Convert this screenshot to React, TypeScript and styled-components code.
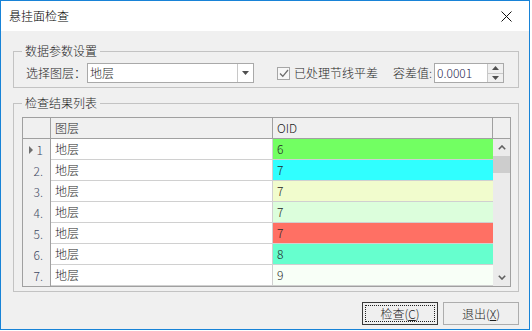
import React from "react";
import styled, { createGlobalStyle } from "styled-components";

const GlobalStyle = createGlobalStyle`
  html, body {
    margin: 0;
    padding: 0;
    background: #ffffff;
  }
  body {
    font-family: "Noto Sans CJK SC", "Microsoft YaHei", sans-serif;
    font-size: 12px;
    font-weight: 300;
    color: #1e1e1e;
  }
`;

const Window = styled.div`
  width: 530px;
  height: 330px;
  box-sizing: border-box;
  border: 1px solid #1883d7;
  display: flex;
  flex-direction: column;
  background: #f0f0f0;
`;

const TitleBar = styled.div`
  height: 30px;
  flex-shrink: 0;
  background: #ffffff;
  display: flex;
  align-items: center;
  justify-content: space-between;
  padding-left: 8px;
`;

const Title = styled.span`
  font-size: 12px;
  line-height: 16px;
  color: #000000;
`;

const CloseButton = styled.div`
  width: 46px;
  height: 30px;
  display: flex;
  align-items: center;
  justify-content: center;
`;

const Body = styled.div`
  flex: 1;
  display: flex;
  flex-direction: column;
  padding: 12px 10px 0 12px;
`;

const Group = styled.fieldset<{ $gap?: number }>`
  margin: ${p => p.$gap || 0}px 0 0 0;
  padding: 0;
  border: 1px solid #c3c3c3;
  min-width: 0;
`;

const Legend = styled.legend`
  margin-left: 8px;
  padding: 0 3px;
  line-height: 16px;
  font-size: 12px;
  color: #1e1e1e;
`;

const ParamRow = styled.div`
  display: flex;
  align-items: center;
  height: 20px;
  padding: 4px 0 4px 12px;
`;

const Label = styled.span<{ $ml?: number }>`
  margin-left: ${p => p.$ml || 0}px;
  line-height: 16px;
  white-space: nowrap;
`;

const Combo = styled.div`
  margin-left: 1px;
  width: 167px;
  height: 20px;
  box-sizing: border-box;
  border: 1px solid #a9a9a9;
  background: #ffffff;
  display: flex;
`;

const ComboText = styled.div`
  flex: 1;
  padding-left: 2px;
  line-height: 18px;
`;

const DropButton = styled.div`
  width: 15px;
  border-left: 1px solid #c8c8c8;
  display: flex;
  align-items: center;
  justify-content: center;
`;

const Check = styled.div`
  margin-left: 23px;
  width: 13px;
  height: 13px;
  box-sizing: border-box;
  border: 1px solid #a6a6a6;
  background: #f7f7f7;
  display: flex;
  align-items: center;
  justify-content: center;
`;

const Spin = styled.div`
  margin-left: 2px;
  width: 70px;
  height: 20px;
  box-sizing: border-box;
  border: 1px solid #a9a9a9;
  background: #ffffff;
  display: flex;
`;

const SpinText = styled.div`
  flex: 1;
  padding-left: 2px;
  line-height: 18px;
  color: #1f1f4f;
`;

const SpinButtons = styled.div`
  width: 15px;
  border-left: 1px solid #c8c8c8;
  display: flex;
  flex-direction: column;
`;

const SpinHalf = styled.div<{ $top?: boolean }>`
  flex: 1;
  display: flex;
  align-items: center;
  justify-content: center;
  background: #f0f0f0;
  border-bottom: ${p => (p.$top ? "1px solid #c8c8c8" : "none")};
`;

const GridWrap = styled.div`
  padding: 6px 7px 4px 8px;
`;

const Grid = styled.div`
  display: grid;
  grid-template-columns: 28px 222px 220px 17px;
  grid-template-rows: 21px repeat(7, 21px);
  border: 1px solid #a0a0a0;
  background: #ffffff;
`;

const HeadCell = styled.div<{ $last?: boolean }>`
  box-sizing: border-box;
  background: #f0f0f0;
  border-bottom: 1px solid #a0a0a0;
  border-right: ${p => (p.$last ? "none" : "1px solid #a0a0a0")};
  padding-left: 4px;
  line-height: 20px;
  color: #1e1e1e;
`;

const RowHead = styled.div`
  box-sizing: border-box;
  background: #f0f0f0;
  border-right: 1px solid #a0a0a0;
  display: flex;
  align-items: center;
  justify-content: flex-end;
  padding-right: 7px;
  color: #3e4862;
  line-height: 20px;
`;

const Marker = styled.span`
  width: 0;
  height: 0;
  border-top: 4px solid transparent;
  border-bottom: 4px solid transparent;
  border-left: 4px solid #707070;
  margin-right: 4px;
`;

const Cell = styled.div<{ $bg?: string; $divider?: boolean }>`
  box-sizing: border-box;
  background: ${p => p.$bg || "#ffffff"};
  border-bottom: 1px solid #d0d0d0;
  border-right: ${p => (p.$divider ? "1px solid #d0d0d0" : "none")};
  padding-left: 4px;
  line-height: 20px;
  color: #262626;
`;

const ScrollBar = styled.div`
  grid-column: 4;
  grid-row: 2 / span 7;
  background: #ebebeb;
  display: flex;
  flex-direction: column;
`;

const ScrollArrow = styled.div`
  height: 17px;
  display: flex;
  align-items: center;
  justify-content: center;
`;

const Thumb = styled.div`
  height: 17px;
  background: #cdcdcd;
`;

const Track = styled.div`
  flex: 1;
`;

const Footer = styled.div`
  display: flex;
  justify-content: flex-end;
  gap: 5px;
  margin-top: 10px;
`;

const Button = styled.div<{ $focused?: boolean }>`
  width: 76px;
  height: 23px;
  box-sizing: border-box;
  border: 1px solid ${p => (p.$focused ? "#3a3a3a" : "#adadad")};
  background: #efefef;
  display: flex;
  align-items: center;
  justify-content: center;
  line-height: 16px;
  color: #1e1e1e;
  outline: ${p => (p.$focused ? "1px dotted #202020" : "none")};
  outline-offset: -4px;
`;

const rows = [
  { oid: "6", bg: "#72ff62" },
  { oid: "7", bg: "#30ffff" },
  { oid: "7", bg: "#f1fccd" },
  { oid: "7", bg: "#dcfedc" },
  { oid: "7", bg: "#ff7064" },
  { oid: "8", bg: "#66ffce" },
  { oid: "9", bg: "#f8fff7" },
];

function Chevron({ up }: { up?: boolean }) {
  return (
    <svg width="8" height="5" viewBox="0 0 8 5">
      <polyline
        points={up ? "0.8,4.2 4,1 7.2,4.2" : "0.8,0.8 4,4 7.2,0.8"}
        fill="none"
        stroke="#606060"
        strokeWidth="1.6"
      />
    </svg>
  );
}

function Triangle({ up }: { up?: boolean }) {
  return (
    <svg width="7" height="4" viewBox="0 0 7 4">
      <polygon points={up ? "0,4 3.5,0 7,4" : "0,0 7,0 3.5,4"} fill="#505050" />
    </svg>
  );
}

export default function App() {
  return (
    <>
      <GlobalStyle />
      <Window>
        <TitleBar>
          <Title>悬挂面检查</Title>
          <CloseButton>
            <svg width="11" height="11" viewBox="0 0 11 11">
              <path d="M0.5 0.5 L10.5 10.5 M10.5 0.5 L0.5 10.5" stroke="#111" strokeWidth="1" />
            </svg>
          </CloseButton>
        </TitleBar>
        <Body>
          <Group>
            <Legend>数据参数设置</Legend>
            <ParamRow>
              <Label>选择图层：</Label>
              <Combo>
                <ComboText>地层</ComboText>
                <DropButton>
                  <Triangle />
                </DropButton>
              </Combo>
              <Check>
                <svg width="10" height="9" viewBox="0 0 10 9">
                  <polyline points="1,4.5 3.8,7.3 9,1" fill="none" stroke="#6e6e6e" strokeWidth="1.3" />
                </svg>
              </Check>
              <Label $ml={4}>已处理节线平差</Label>
              <Label $ml={15}>容差值:</Label>
              <Spin>
                <SpinText>0.0001</SpinText>
                <SpinButtons>
                  <SpinHalf $top>
                    <Triangle up />
                  </SpinHalf>
                  <SpinHalf>
                    <Triangle />
                  </SpinHalf>
                </SpinButtons>
              </Spin>
            </ParamRow>
          </Group>

          <Group $gap={7}>
            <Legend>检查结果列表</Legend>
            <GridWrap>
              <Grid>
                <HeadCell />
                <HeadCell>图层</HeadCell>
                <HeadCell>OID</HeadCell>
                <HeadCell $last />
                {rows.map((r, i) => (
                  <React.Fragment key={i}>
                    <RowHead>
                      {i === 0 ? (
                        <>
                          <Marker />1
                        </>
                      ) : (
                        `${i + 1}.`
                      )}
                    </RowHead>
                    <Cell $divider>地层</Cell>
                    <Cell $bg={r.bg}>{r.oid}</Cell>
                  </React.Fragment>
                ))}
                <ScrollBar>
                  <ScrollArrow>
                    <Chevron up />
                  </ScrollArrow>
                  <Thumb />
                  <Track />
                  <ScrollArrow>
                    <Chevron />
                  </ScrollArrow>
                </ScrollBar>
              </Grid>
            </GridWrap>
          </Group>

          <Footer>
            <Button $focused>
              检查(<u>C</u>)
            </Button>
            <Button>
              退出(<u>X</u>)
            </Button>
          </Footer>
        </Body>
      </Window>
    </>
  );
}
